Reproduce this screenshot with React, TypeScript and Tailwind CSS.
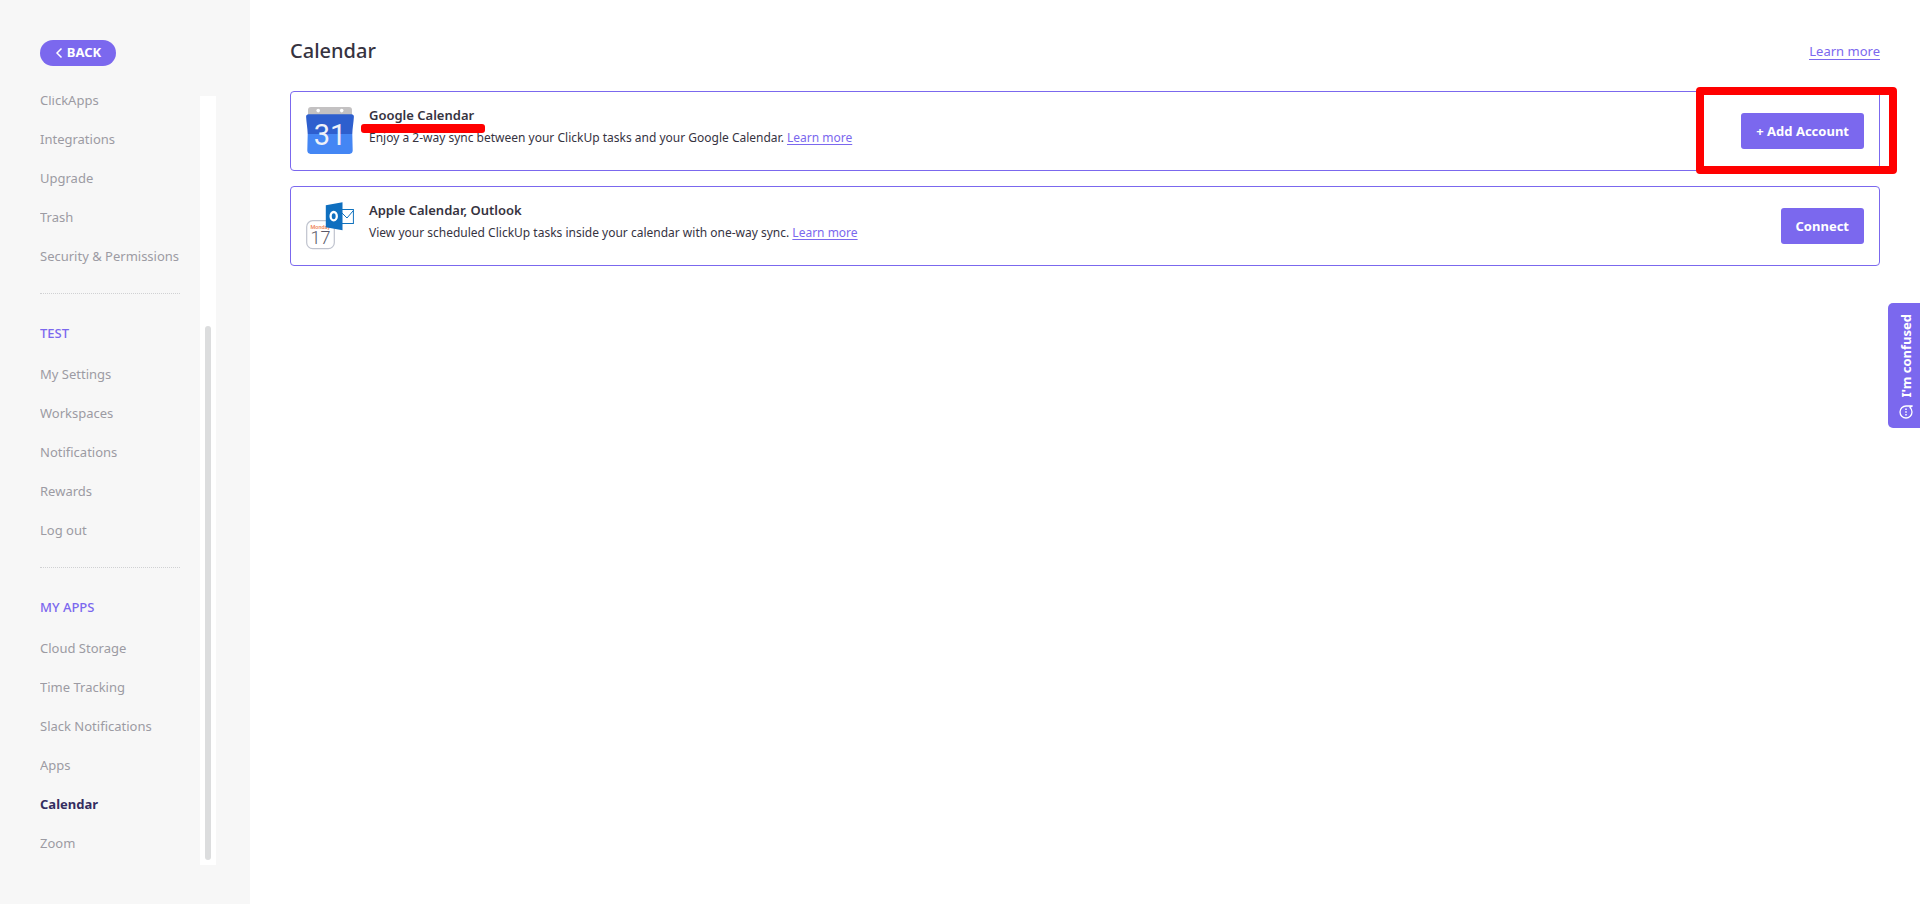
import { clsx } from 'clsx';
import type { ReactNode } from 'react';

interface NavSection {
  title?: string;
  items: string[];
}

const sections: NavSection[] = [
  { items: ['ClickApps', 'Integrations', 'Upgrade', 'Trash', 'Security & Permissions'] },
  { title: 'TEST', items: ['My Settings', 'Workspaces', 'Notifications', 'Rewards', 'Log out'] },
  {
    title: 'MY APPS',
    items: ['Cloud Storage', 'Time Tracking', 'Slack Notifications', 'Apps', 'Calendar', 'Zoom'],
  },
];

function GoogleCalendarIcon() {
  return (
    <svg className="h-12 w-12 shrink-0" viewBox="0 0 48 48" aria-hidden="true">
      <path d="M5 0h38a3 3 0 0 1 3 3v6H2V3a3 3 0 0 1 3-3z" fill="#c3c1c2" />
      <circle cx="12.2" cy="3.6" r="1.8" fill="#fff" />
      <circle cx="35.7" cy="3.6" r="1.8" fill="#fff" />
      <path d="M2.6 7.2h42.8c1.6 0 2.6 1 2.5 2.5-.3 6-1.4 11-1.6 17.3H1.7C1.5 20.7.4 15.7.1 9.7 0 8.2 1 7.2 2.6 7.2z" fill="#2e5fce" />
      <path d="M1.7 27h44.6c0 5.5.4 11 .4 16.6 0 2-1.2 3.3-3.2 3.3h-39c-2 0-3.2-1.3-3.2-3.3C1.3 38 1.7 32.5 1.7 27z" fill="#4486f4" />
      <text x="24" y="37.5" textAnchor="middle" fontFamily="Roboto, sans-serif" fontSize="29" fill="#eef1f8">
        31
      </text>
    </svg>
  );
}

function AppleOutlookIcon() {
  return (
    <svg className="h-12 w-12 shrink-0" viewBox="0 0 48 48" aria-hidden="true">
      <rect x="0.7" y="18.7" width="27.6" height="28" rx="6" fill="#fff" stroke="#bfc3ce" strokeWidth="1.2" />
      <text x="4.5" y="26.5" fontFamily="Roboto, sans-serif" fontSize="5.5" fontWeight="500" fill="#ee8154">
        Monday
      </text>
      <text x="14.5" y="42" textAnchor="middle" fontFamily="Roboto, sans-serif" fontWeight="300" fontSize="18" fill="#5b5868">
        17
      </text>
      <rect x="34" y="7.5" width="13.4" height="14" fill="#fff" stroke="#1072bd" strokeWidth="1" />
      <path d="M36 11l5 5 6.4-7.5" fill="none" stroke="#1072bd" strokeWidth="1" />
      <path d="M19.8 3.2L36.5.2v28L19.8 25.2z" fill="#0f6fbf" />
      <ellipse cx="27.7" cy="14.2" rx="3.1" ry="4.2" fill="none" stroke="#fff" strokeWidth="2.3" />
    </svg>
  );
}

function Sidebar() {
  return (
    <aside className="flex h-screen w-[250px] shrink-0 flex-col bg-[#f7f7f7] pt-10 pb-[39px] pl-10">
      <button
        type="button"
        className="flex h-[26px] w-[76px] shrink-0 items-center justify-center gap-1 rounded-full bg-[#7b68ee] text-[13px] font-bold text-white"
      >
        <svg className="h-3 w-2" viewBox="0 0 8 12" aria-hidden="true">
          <path d="M6.5 1.5L2 6l4.5 4.5" fill="none" stroke="currentColor" strokeWidth="1.5" />
        </svg>
        BACK
      </button>

      <div className="mt-[30px] flex min-h-0 grow">
        <nav className="flex w-40 flex-col justify-end overflow-hidden pb-[2px]">
          {sections.map((section, index) => (
            <div key={index} className="shrink-0">
              {section.title && (
                <h2 className="mt-[17px] mr-5 border-t border-dotted border-[#d0d1d3] pt-[29px] pb-3 text-[13px] leading-5 font-medium text-[#7b68ee]">
                  {section.title}
                </h2>
              )}
              <ul>
                {section.items.map((item) => (
                  <li key={item}>
                    <a
                      href="#"
                      className={clsx(
                        'block text-[13px] leading-[39px] whitespace-nowrap',
                        item === 'Calendar' ? 'font-bold text-[#342d60]' : 'text-[#9c9ba3]'
                      )}
                    >
                      {item}
                    </a>
                  </li>
                ))}
              </ul>
            </div>
          ))}
        </nav>
        {/* Scroll track */}
        <div className="flex w-4 bg-white px-[5px] pt-[230px] pb-[5px]">
          <div className="grow rounded-full bg-[#dcddde]"></div>
        </div>
      </div>
    </aside>
  );
}

interface CardProps {
  icon: ReactNode;
  title: string;
  description: string;
  action: string;
  highlighted?: boolean;
}

function CalendarCard({ icon, title, description, action, highlighted }: CardProps) {
  return (
    <section className="relative flex h-20 items-center rounded-[4px] border border-[#7b68ee] px-[15px]">
      {icon}
      <div className="ml-[15px] grow pb-[9px] text-[#36333f]">
        <h2 className="mb-px text-[13px] leading-[22px] font-semibold">{title}</h2>
        <p className="text-xs leading-[22px]">
          {description}{' '}
          <a href="#" className="text-[#7b68ee] underline underline-offset-2">
            Learn more
          </a>
        </p>
      </div>
      <button
        type="button"
        className="h-9 rounded-[3px] bg-[#7b68ee] px-[15px] pt-[2px] text-[13px] font-bold text-white"
      >
        {action}
      </button>
      {highlighted && (
        <>
          <div className="absolute top-8 left-[70px] h-[9px] w-[124px] rounded-[3px] bg-[#ff0000]"></div>
          <div className="pointer-events-none absolute -top-[5px] -right-[18px] -bottom-1 w-[201px] rounded-[4px] border-8 border-[#ff0000]"></div>
        </>
      )}
    </section>
  );
}

export default function App() {
  return (
    <div className="flex min-h-screen bg-white font-['Noto_Sans','Open_Sans',sans-serif]">
      <Sidebar />

      <main className="grow px-10 pt-9">
        <header className="flex h-[30px] items-center justify-between">
          <h1 className="text-xl font-medium text-[#36333f]">Calendar</h1>
          <a href="#" className="border-b border-[#7b68ee] text-[13px] leading-4 text-[#7b68ee]">
            Learn more
          </a>
        </header>

        <div className="mt-[25px] flex flex-col gap-[15px]">
          <CalendarCard
            icon={<GoogleCalendarIcon />}
            title="Google Calendar"
            description="Enjoy a 2-way sync between your ClickUp tasks and your Google Calendar."
            action="+ Add Account"
            highlighted
          />
          <CalendarCard
            icon={<AppleOutlookIcon />}
            title="Apple Calendar, Outlook"
            description="View your scheduled ClickUp tasks inside your calendar with one-way sync."
            action="Connect"
          />
        </div>
      </main>

      {/* Feedback tab on the window edge */}
      <button
        type="button"
        className="fixed top-[303px] right-0 flex h-[125px] w-8 flex-col items-center justify-end gap-2 rounded-l-[5px] bg-[#7b68ee] pb-[9px] pl-1 text-white"
      >
        <span className="rotate-180 text-[13px] leading-4 font-bold [writing-mode:vertical-rl]">I'm confused</span>
        <svg className="h-[14px] w-[14px]" viewBox="0 0 14 14" fill="none" stroke="currentColor" aria-hidden="true">
          <path d="M13.3 1H7a6 6 0 1 0 6 6c0-2-.8-3.5-2-4.6z" strokeWidth="1.3" strokeLinejoin="round" />
          <path d="M7 3.6v1.4M7 6.3v1.4M7 9v1.4" strokeWidth="1.5" />
        </svg>
      </button>
    </div>
  );
}
